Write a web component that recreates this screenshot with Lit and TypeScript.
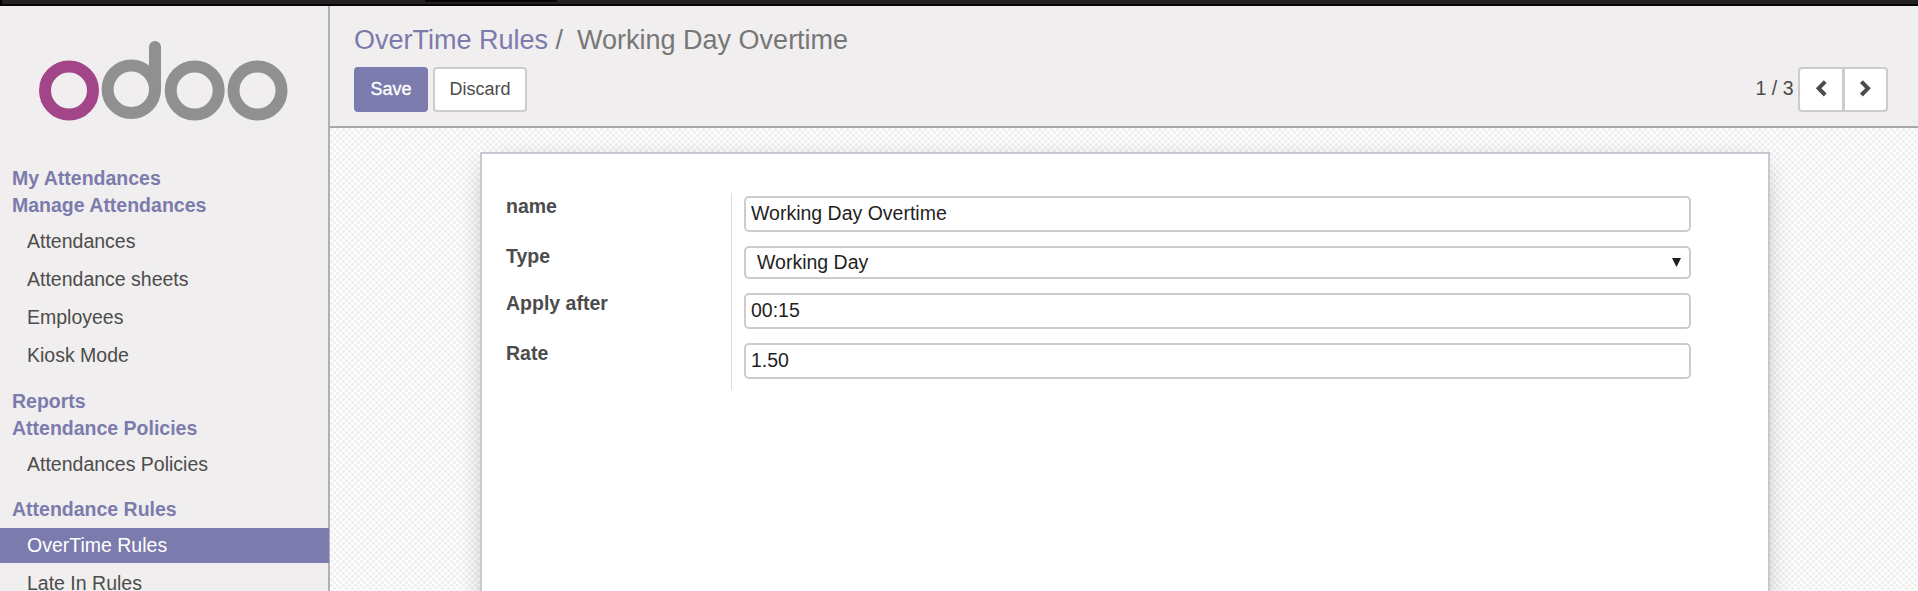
import { LitElement, html, css } from "lit";
import { customElement } from "lit/decorators.js";

const MENU = [
  { title: "My Attendances", items: [] },
  { title: "Manage Attendances", items: ["Attendances", "Attendance sheets", "Employees", "Kiosk Mode"] },
  { title: "Reports", items: [] },
  { title: "Attendance Policies", items: ["Attendances Policies"] },
  { title: "Attendance Rules", items: ["OverTime Rules", "Late In Rules"] },
];
const ACTIVE = "OverTime Rules";

@customElement("side-menu")
export class SideMenu extends LitElement {
  static styles = css`
    :host { display: block; box-sizing: border-box; width: 330px; flex: none; background: #f0eeee; border-right: 2px solid #adb0b5; height: 585px; }
    .logo { display: block; width: 328px; height: 159px; }
    .title { height: 27px; line-height: 27px; padding-left: 12px; font-weight: bold; color: #7c7bad; }
    .items { padding: 5px 0 14.5px; display: flex; flex-direction: column; gap: 3px; }
    .item { height: 35px; line-height: 35px; padding-left: 27px; color: #4c4c4c; }
    .active { background: #7c7bad; color: #fff; margin-right: -1px; }
  `;
  render() {
    return html`
      <svg class="logo" viewBox="0 6 328 159" fill="none" stroke-width="12">
        <circle cx="69" cy="90.5" r="24" stroke="#a24689"/>
        <g stroke="#8f908f">
          <circle cx="131.3" cy="89.3" r="23.7"/>
          <path d="M155 89V47" stroke-linecap="round"/>
          <circle cx="194.7" cy="90.5" r="24"/>
          <circle cx="257.5" cy="90.5" r="24"/>
        </g>
      </svg>
      ${MENU.map((s) => html`
        <div class="title">${s.title}</div>
        ${s.items.length ? html`<div class="items">${s.items.map((i) => html`<div class="item ${i === ACTIVE ? "active" : ""}">${i}</div>`)}</div>` : ""}
      `)}
    `;
  }
}

@customElement("control-panel")
export class ControlPanel extends LitElement {
  static styles = css`
    :host { display: block; box-sizing: border-box; height: 122px; background: #f0eeee; border-bottom: 2px solid #a8a8a8; padding: 17px 30px 0 24px; }
    .crumbs { font-size: 27px; line-height: 34px; height: 44px; color: #777; white-space: pre; }
    .link { color: #7c7bad; }
    .current { margin-left: -1px; }
    .row { display: flex; align-items: flex-start; height: 45px; }
    .btn { box-sizing: border-box; height: 45px; line-height: 40px; border: 2px solid #ccc; border-radius: 4px; font-size: 18px; text-align: center; background: #fff; color: #4c4c4c; padding: 0; }
    .save { width: 74px; background: #7c7bad; border-color: #7c7bad; color: #fff; margin-right: 5px; -webkit-text-stroke: 0.3px #fff; }
    .discard { width: 94px; }
    .count { margin-left: auto; line-height: 43px; color: #4c4c4c; margin-right: 4.5px; }
    .pager { display: flex; box-sizing: border-box; width: 90px; height: 45px; border: 2px solid #ccc; border-radius: 4px; background: #fff; }
    .nav { flex: 1; display: flex; padding: 11px 0 0 15px; }
    .nav + .nav { border-left: 3px solid #ccc; padding-left: 14px; }
    .nav svg { width: 13px; height: 17px; }
  `;
  render() {
    return html`
      <div class="crumbs"><span class="link">OverTime Rules</span> /&nbsp; <span class="current">Working Day Overtime</span></div>
      <div class="row">
        <div class="btn save">Save</div>
        <div class="btn discard">Discard</div>
        <div class="count">1 / 3</div>
        <div class="pager">
          <div class="nav"><svg viewBox="0 0 13 17" fill="none" stroke="#4c4c4c" stroke-width="4"><path d="M10.2 1.6L3.6 8.3L10.2 15"/></svg></div>
          <div class="nav"><svg viewBox="0 0 13 17" fill="none" stroke="#4c4c4c" stroke-width="4"><path d="M2.4 1.6L9 8.3L2.4 15"/></svg></div>
        </div>
      </div>
    `;
  }
}

@customElement("form-sheet")
export class FormSheet extends LitElement {
  static styles = css`
    :host { display: block; box-sizing: border-box; height: 500px; margin: 0 148px 0 150px; border: 2px solid #c8c8d3; background: #fff; box-shadow: 0 7px 28px -11px rgba(0, 0, 0, 0.42); padding: 39px 77px 0 24px; }
    .group { display: grid; grid-template-columns: 226px 1fr; height: 197px; }
    .labels { border-right: 1px solid #ddd; font-weight: bold; color: #4c4c4c; }
    .label { line-height: 26px; }
    .l1 { height: 50px; }
    .l2 { height: 47px; }
    .l3 { height: 50px; }
    .fields { padding: 3px 0 0 12px; display: flex; flex-direction: column; gap: 14px; }
    .field { box-sizing: border-box; height: 36px; line-height: 31px; border: 2px solid #ccc; border-radius: 5px; padding-left: 5px; color: #1f1f1f; }
    .select { height: 33px; line-height: 28px; padding: 0 8px 0 11px; display: flex; justify-content: space-between; }
    .arrow { width: 9px; height: 9px; margin-top: 10px; }
  `;
  render() {
    return html`
      <div class="group">
        <div class="labels">
          <div class="label l1">name</div>
          <div class="label l2">Type</div>
          <div class="label l3">Apply after</div>
          <div class="label">Rate</div>
        </div>
        <div class="fields">
          <div class="field">Working Day Overtime</div>
          <div class="field select"><span>Working Day</span><svg class="arrow" viewBox="0 0 9 9"><path d="M0 0H9L4.5 9Z" fill="#1f1f1f"/></svg></div>
          <div class="field">00:15</div>
          <div class="field">1.50</div>
        </div>
      </div>
    `;
  }
}

@customElement("app-root")
export class AppRoot extends LitElement {
  static styles = css`
    :host { display: block; height: 591px; overflow: hidden; font: 19.5px "Liberation Sans", Arial, sans-serif; }
    .top { box-sizing: border-box; height: 6px; background: #222; border-bottom: 2px solid #0a000a; border-left: 2px solid #000; }
    .tab { width: 132px; height: 2px; margin-left: 423px; background: #050505; }
    .body { display: flex; height: 585px; }
    .main { flex: 1; min-width: 0; overflow: hidden; }
    .canvas {
      height: 463px; padding-top: 24px; box-sizing: border-box; overflow: hidden; background-color: #fefefe;
      background-image:
        radial-gradient(circle at 25% 25%, #ededed 0.8px, transparent 2.3px),
        radial-gradient(circle at 75% 75%, #ededed 0.8px, transparent 2.3px);
      background-size: 6px 6px;
    }
  `;
  render() {
    return html`
      <div class="top"><div class="tab"></div></div>
      <div class="body">
        <side-menu></side-menu>
        <div class="main">
          <control-panel></control-panel>
          <div class="canvas"><form-sheet></form-sheet></div>
        </div>
      </div>
    `;
  }
}
